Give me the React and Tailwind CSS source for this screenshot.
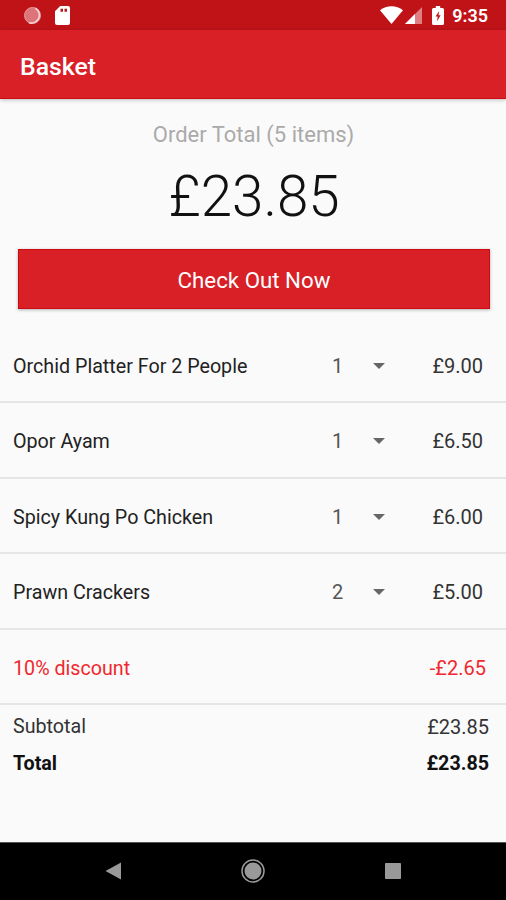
import React, { useState } from 'react';

const ITEMS = [
  { id: 1, name: 'Orchid Platter For 2 People', qty: 1, price: '£9.00' },
  { id: 2, name: 'Opor Ayam', qty: 1, price: '£6.50' },
  { id: 3, name: 'Spicy Kung Po Chicken', qty: 1, price: '£6.00' },
  { id: 4, name: 'Prawn Crackers', qty: 2, price: '£5.00' },
];

function StatusBar() {
  return (
    <div className="flex h-[30px] items-center bg-[#c01318] pl-[23px] pr-[18px] text-white">
      <svg width="19" height="19" viewBox="0 0 19 19">
        <circle cx="9.5" cy="9.5" r="8" fill="#dd747a" stroke="#e59a9d" />
        <path d="M12.5 2.2A8 8 0 0 1 6 16.700" fill="none" stroke="#f6d5d5" strokeWidth="1.6" />
      </svg>
      <svg className="ml-[13px]" width="15" height="19" viewBox="0 0 15 19">
        <path
          fill="#fff"
          fillRule="evenodd"
          d="M5.2 0H13a2 2 0 0 1 2 2v15a2 2 0 0 1-2 2H2a2 2 0 0 1-2-2V5.2zM5.5 2.800v3h2.500v-3zM9.500 2.800v3h2.500v-3z"
        />
      </svg>
      <div className="ml-auto flex items-center">
        <svg width="23" height="18" viewBox="0 0 23 18">
          <path d="M0 4.200C6.500-1.200 16.500-1.200 23 4.200L11.500 18z" fill="#fff" />
        </svg>
        <svg className="ml-[2px]" width="17" height="17" viewBox="0 0 17 17">
          <path d="M17 0v17H0z" fill="#df7f81" />
          <path d="M10 7v10H0z" fill="#fff" />
        </svg>
        <svg className="ml-[10px]" width="12" height="19" viewBox="0 0 12 19">
          <path
            fill="#fff"
            fillRule="evenodd"
            d="M3.800 0h4.400v2H10.500A1.500 1.500 0 0 1 12 3.500v14a1.500 1.500 0 0 1-1.500 1.500h-9A1.500 1.500 0 0 1 0 17.500v-14A1.500 1.500 0 0 1 1.500 2h2.300zM7.200 5L3.500 10.500h2.200L5 15.500L8.600 9.200H6.500z"
          />
        </svg>
        <span className="ml-[8px] pt-[2px] text-[18px] font-semibold leading-[28px]">9:35</span>
      </div>
    </div>
  );
}

function BasketRow({ item, onChange }) {
  return (
    <div className="flex h-[75.5px] items-center border-b-2 border-[#e6e6e6] pl-[13px] pr-[23px] pt-[3px]">
      <span className="flex-1 pt-[2px] text-[19.7px] text-[#222]">{item.name}</span>
      <button
        type="button"
        onClick={() => onChange(item.id)}
        className="flex w-[54px] items-center justify-between text-[#555]"
      >
        <span>{item.qty}</span>
        <svg className="mr-px" width="12" height="6" viewBox="0 0 12 6">
          <path d="M0 0h12L6 6z" fill="#666" />
        </svg>
      </button>
      <span className="w-[97px] text-right text-[#333]">{item.price}</span>
    </div>
  );
}

function NavBar() {
  return (
    <div className="flex h-[58px] items-center justify-between border-t border-[#555] bg-black pb-[2px] pl-[104px] pr-[105px]">
      <svg width="17" height="18" viewBox="0 0 17 18">
        <path d="M17 .5v17L1.500 9z" fill="#999" />
      </svg>
      <svg width="24" height="24" viewBox="0 0 24 24">
        <circle cx="12" cy="12" r="11" fill="none" stroke="#999" strokeWidth="1.5" />
        <circle cx="12" cy="12" r="8.5" fill="#999" />
      </svg>
      <svg width="16" height="16" viewBox="0 0 16 16">
        <rect width="16" height="16" rx="0.8" fill="#999" />
      </svg>
    </div>
  );
}

export default function App() {
  const [items, setItems] = useState(ITEMS);

  const handleChange = (id) => {
    setItems(items.map((item) => (item.id === id ? { ...item, qty: item.qty + 1 } : item)));
  };

  return (
    <div className="flex h-[900px] w-[506px] flex-col overflow-hidden bg-[#fafafa] font-[Roboto,sans-serif] text-[20px] leading-[24px]">
      <StatusBar />
      <header className="flex h-[69px] shrink-0 items-center border-b border-[#c80c12] bg-[#d92027] pl-[20px] pt-[5px] shadow-[0_1px_4px_rgba(0,0,0,0.25)]">
        <h1 className="text-[24.8px] font-medium text-white">Basket</h1>
      </header>

      <main className="flex flex-1 flex-col">
        <div className="mt-[22px] pl-px text-center text-[22px] leading-[28px] text-[#aaa]">Order Total (5 items)</div>
        <div className="mt-[15px] pl-[2px] text-center text-[56.5px] font-light leading-[66px] text-[#111]">£23.85</div>
        <button
          type="button"
          className="ml-[18px] mr-[16px] mt-[19px] h-[60px] border border-[#cc0a10] bg-[#d92027] pt-px text-[22.3px] text-white shadow-[0_1px_3px_rgba(0,0,0,0.3)]"
        >
          Check Out Now
        </button>

        <div className="mt-[18.5px]">
          {items.map((item) => (
            <BasketRow key={item.id} item={item} onChange={handleChange} />
          ))}
          <div className="flex h-[75.5px] items-center justify-between border-b-2 border-[#e6e6e6] pl-[13px] pr-[20px] pt-[3px] text-[#f0282d]">
            <span className="pt-[2px] text-[19.7px]">10% discount</span>
            <span>-£2.65</span>
          </div>
        </div>

        <div className="flex items-center justify-between pl-[13px] pr-[17px] pt-[9px] text-[#333]">
          <span className="pt-px text-[19.7px]">Subtotal</span>
          <span>£23.85</span>
        </div>
        <div className="flex justify-between pl-[13px] pr-[17px] pt-[12.500px] text-[19.7px] font-bold text-[#111]">
          <span>Total</span>
          <span>£23.85</span>
        </div>
      </main>

      <NavBar />
    </div>
  );
}
